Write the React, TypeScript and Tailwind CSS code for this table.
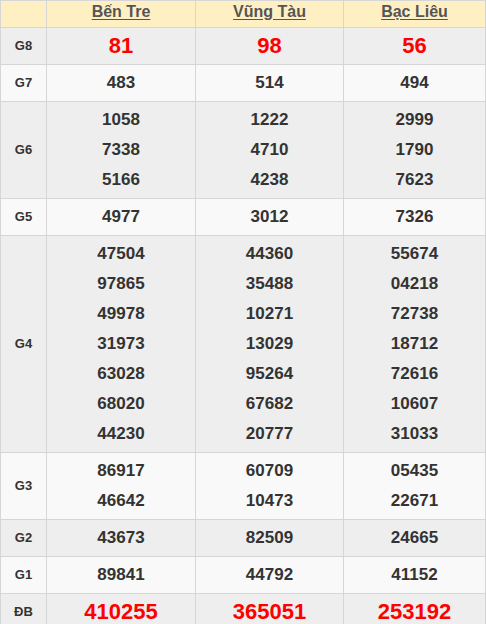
import React from "react";

type Row = {
  label: string;
  values: string[][];
  big?: boolean;
  shade: boolean;
};

const provinces = ["Bến Tre", "Vũng Tàu", "Bạc Liêu"];

const rows: Row[] = [
  { label: "G8", values: [["81"], ["98"], ["56"]], big: true, shade: true },
  { label: "G7", values: [["483"], ["514"], ["494"]], shade: false },
  {
    label: "G6",
    values: [
      ["1058", "7338", "5166"],
      ["1222", "4710", "4238"],
      ["2999", "1790", "7623"],
    ],
    shade: true,
  },
  { label: "G5", values: [["4977"], ["3012"], ["7326"]], shade: false },
  {
    label: "G4",
    values: [
      ["47504", "97865", "49978", "31973", "63028", "68020", "44230"],
      ["44360", "35488", "10271", "13029", "95264", "67682", "20777"],
      ["55674", "04218", "72738", "18712", "72616", "10607", "31033"],
    ],
    shade: true,
  },
  {
    label: "G3",
    values: [
      ["86917", "46642"],
      ["60709", "10473"],
      ["05435", "22671"],
    ],
    shade: false,
  },
  { label: "G2", values: [["43673"], ["82509"], ["24665"]], shade: true },
  { label: "G1", values: [["89841"], ["44792"], ["41152"]], shade: false },
  { label: "ĐB", values: [["410255"], ["365051"], ["253192"]], big: true, shade: true },
];

export default function App() {
  return (
    <div className="w-[486px] h-[624px] overflow-hidden bg-white font-['Liberation_Sans',Arial,sans-serif]">
      <table className="w-[486px] border-collapse table-fixed">
        <colgroup>
          <col className="w-[46px]" />
          <col className="w-[149px]" />
          <col className="w-[148px]" />
          <col />
        </colgroup>
        <thead>
          <tr className="bg-[#fff0c4] h-[27px]">
            <th className="border border-[#d6d6d6]" />
            {provinces.map((p) => (
              <th
                key={p}
                className="border border-[#d6d6d6] pb-[5px] pt-0 align-middle text-[16px] font-bold leading-[20px] text-[#555555]"
              >
                <span className="underline underline-offset-[2px]">{p}</span>
              </th>
            ))}
          </tr>
        </thead>
        <tbody>
          {rows.map((row) => (
            <tr
              key={row.label}
              className={row.shade ? "bg-[#eeeeee]" : "bg-[#f9f9f9]"}
            >
              <td className="border border-[#d6d6d6] text-center align-middle text-[13px] font-bold text-[#333333]">
                {row.label}
              </td>
              {row.values.map((col, i) => (
                <td
                  key={i}
                  className="border border-[#d6d6d6] py-[3px] text-center align-middle"
                >
                  {col.map((v) => (
                    <div
                      key={v}
                      className={
                        row.big
                          ? "text-[22px] font-bold leading-[30px] text-[#ff0000]"
                          : "text-[17px] font-bold leading-[30px] text-[#333333]"
                      }
                    >
                      {v}
                    </div>
                  ))}
                </td>
              ))}
            </tr>
          ))}
        </tbody>
      </table>
    </div>
  );
}
